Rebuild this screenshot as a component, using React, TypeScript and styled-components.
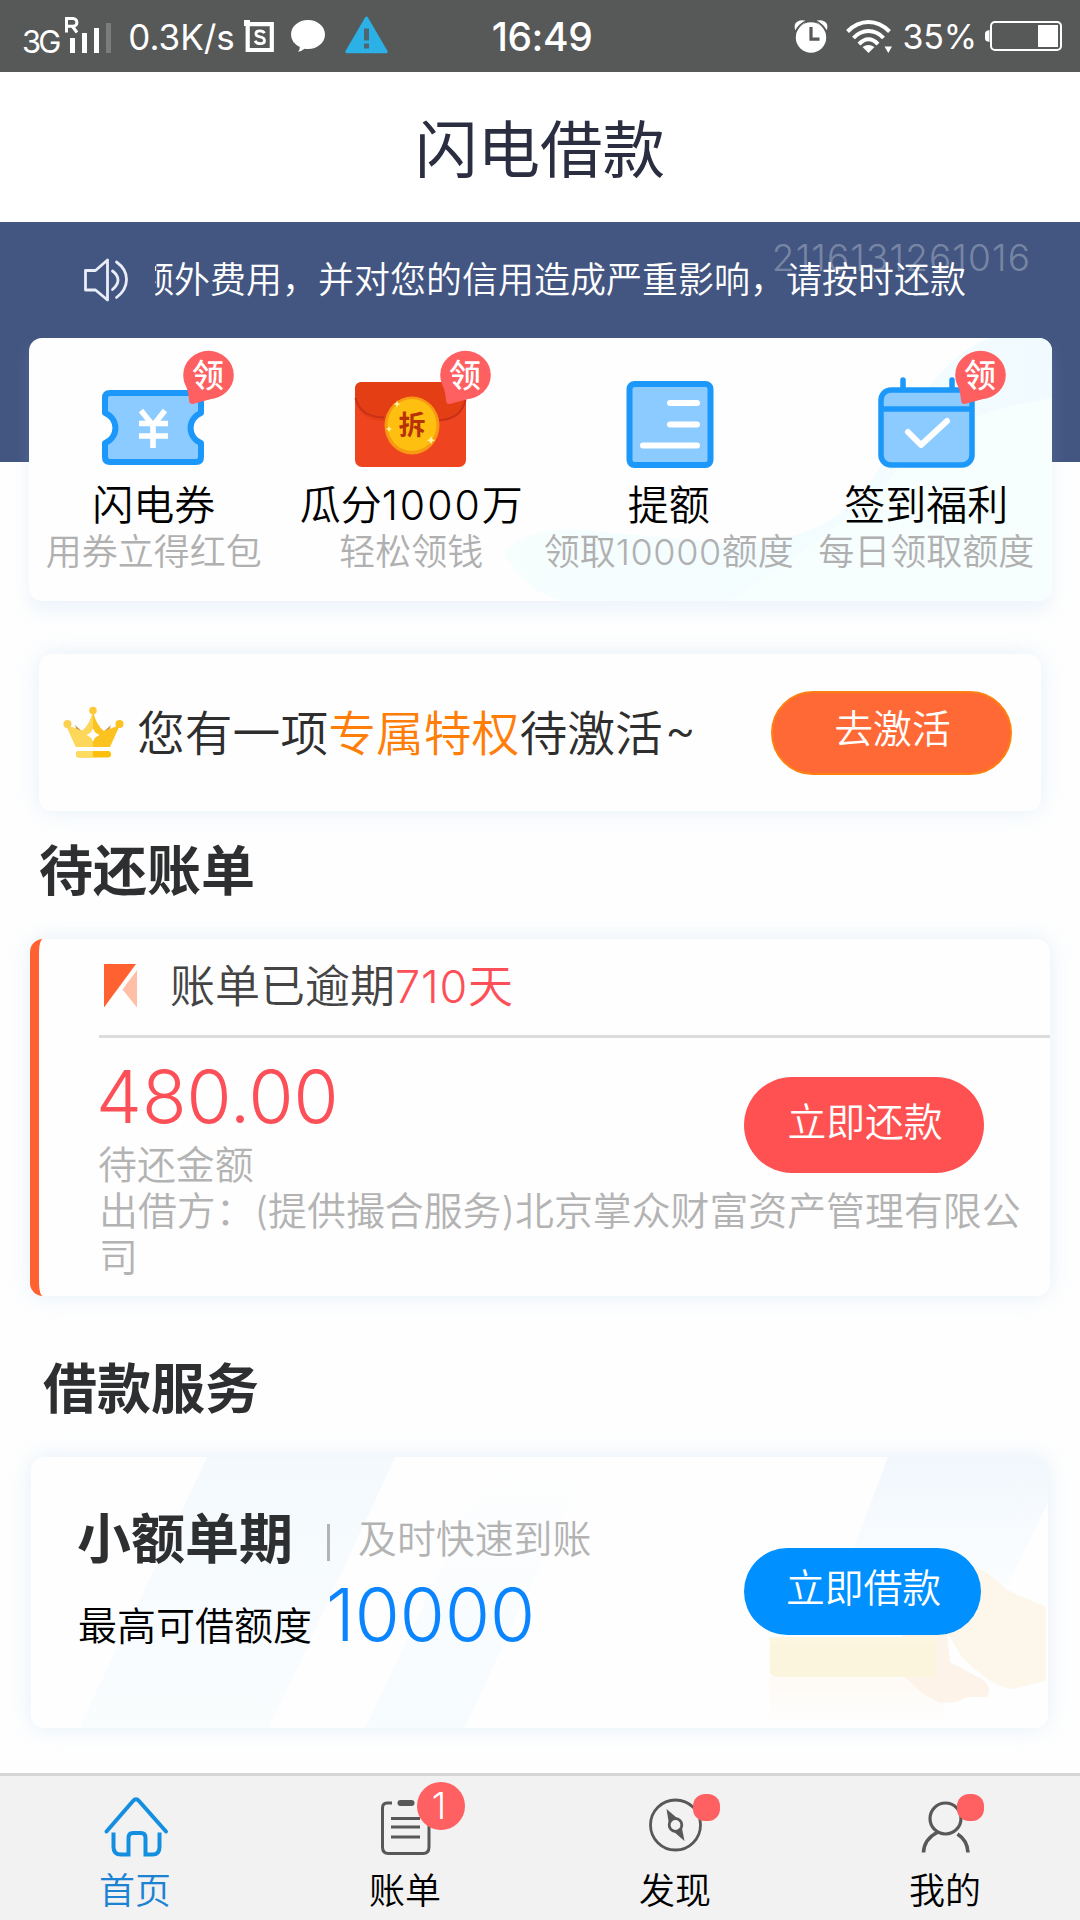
import React from "react";
import styled, { createGlobalStyle } from "styled-components";

const GlobalStyle = createGlobalStyle`
  html, body { margin: 0; padding: 0; background: #fefefe; }
  * { box-sizing: border-box; }
  svg { display: block; flex: none; overflow: visible; }
`;

const FONT = `"Inter", "Noto Sans CJK SC", sans-serif`;

const Page = styled.div`
  position: relative;
  width: 1080px;
  height: 1920px;
  display: flex;
  flex-direction: column;
  overflow: hidden;
  background: #fefefe;
  font-family: ${FONT};
  font-weight: 350;
  color: #000;
`;

/* ---------- status bar ---------- */

const StatusBar = styled.div`
  flex: none;
  height: 72px;
  padding: 0 18px 0 22px;
  display: grid;
  grid-template-columns: 1fr auto 1fr;
  align-items: center;
  background: #575858;
  color: #fff;
`;

const StatusGroup = styled.div<{ $end?: boolean }>`
  display: flex;
  align-items: center;
  height: 72px;
  justify-content: ${(p) => (p.$end ? "flex-end" : "flex-start")};
`;

const StatusText = styled.span<{ $size: number; $weight?: number; $ls?: number }>`
  font-size: ${(p) => p.$size}px;
  font-weight: ${(p) => p.$weight ?? 400};
  letter-spacing: ${(p) => p.$ls ?? 0}px;
  line-height: 70px;
  padding-top: 2px;
  white-space: nowrap;
`;

const Network = styled(StatusText)`
  padding-top: 12px;
  line-height: 60px;
`;

const Gap = styled.span<{ $w: number }>`
  flex: none;
  width: ${(p) => p.$w}px;
`;

/* ---------- title and notice ---------- */

const Header = styled.header`
  flex: none;
  height: 150px;
  display: flex;
  align-items: center;
  justify-content: center;
  background: #fff;
  font-size: 62.5px;
  font-weight: 400;
  line-height: 90px;
  color: #2b2d40;
  padding-top: 6px;
`;

const Hero = styled.section`
  position: relative;
  flex: none;
  height: 240px;
  background: #435681;
`;

const Notice = styled.div`
  position: relative;
  display: flex;
  align-items: center;
  height: 116px;
  padding: 0 114px 0 84px;
`;

const NoticeClip = styled.div`
  flex: none;
  width: 811px;
  margin-left: 27px;
  display: flex;
  justify-content: flex-end;
  overflow: hidden;
  white-space: nowrap;
  font-size: 36px;
  line-height: 60px;
  color: #fff;
`;

const Serial = styled.div`
  position: absolute;
  top: 10px;
  right: 49px;
  font-size: 37px;
  letter-spacing: 1.1px;
  line-height: 52px;
  color: rgba(255, 255, 255, 0.3);
`;

/* ---------- cards ---------- */

const Card = styled.section`
  position: relative;
  flex: none;
  background: #fefefe;
  border-radius: 13px;
  box-shadow: 0 0 22px rgba(150, 195, 235, 0.24);
`;

const FeatureCard = styled(Card)`
  height: 263px;
  margin: -124px 28px 0 29px;
  box-shadow: 0 10px 18px rgba(150, 195, 235, 0.16);
`;

const Backdrop = styled.svg`
  position: absolute;
  inset: 0;
  width: 100%;
  height: 100%;
  border-radius: 13px;
  overflow: hidden;
`;

const FeatureGrid = styled.div`
  position: relative;
  display: grid;
  grid-template-columns: repeat(4, 257.5px);
  margin: 0 -4px;
`;

const Feature = styled.div`
  display: flex;
  flex-direction: column;
  align-items: center;
  white-space: nowrap;
`;

const FeatureIcon = styled.div`
  position: relative;
  width: 120px;
  height: 100px;
  margin-top: 33px;
`;

const FeatureBadge = styled.div`
  position: absolute;
  left: 89px;
  top: -20px;
  width: 51px;
  height: 53px;
`;

const FeatureTitle = styled.div`
  margin-top: 9px;
  font-size: 41px;
  line-height: 50px;
`;

const Digits = styled.span<{ $ls: number }>`
  letter-spacing: ${(p) => p.$ls}px;
`;

const FeatureNote = styled.div`
  font-size: 36px;
  line-height: 44px;
  color: #b0b0b0;
`;

const Pill = styled.button<{ $w: number; $h: number; $bg: string; $edge?: string; $drop?: number }>`
  position: relative;
  flex: none;
  display: flex;
  align-items: center;
  justify-content: center;
  width: ${(p) => p.$w}px;
  height: ${(p) => p.$h}px;
  padding: 0 0 7px 2px;
  border: ${(p) => (p.$edge ? `2px solid ${p.$edge}` : "none")};
  border-radius: ${(p) => p.$h / 2}px;
  background: ${(p) => p.$bg};
  color: #fff;
  font: 350 38.8px/60px ${FONT};
  white-space: nowrap;
`;

const PromoCard = styled(Card)`
  height: 157px;
  margin: 53px 39px 0;
  padding: 0 29px 0 23px;
  display: flex;
  align-items: center;
`;

const PromoText = styled.div`
  flex: 1;
  margin-left: 12px;
  font-size: 47.8px;
  line-height: 70px;
  color: #2e2e2e;
  white-space: nowrap;
  padding-top: 3px;

  em {
    font-style: normal;
    color: #ff7e0a;
  }
`;

const Tilde = styled.span`
  margin-left: 2px;
  line-height: 0;
  vertical-align: 4px;
`;

const Heading = styled.h2<{ $h: number; $x: number; $top: number }>`
  flex: none;
  height: ${(p) => p.$h}px;
  margin: 0;
  padding: ${(p) => p.$top}px 0 0 ${(p) => p.$x}px;
  font-size: 54px;
  font-weight: 700;
  line-height: 60px;
  color: #2e2f30;
`;

/* ---------- bill ---------- */

const BillCard = styled(Card)`
  height: 357px;
  margin: 0 30px;
  border-left: 9px solid #ff6230;
  padding-left: 60px;
`;

const BillHead = styled.div`
  display: flex;
  align-items: center;
  height: 99px;
  padding: 0 0 2px 5px;
  border-bottom: 3px solid #dcdcdd;
  font-size: 45px;
  line-height: 60px;
  color: #444;
`;

const BillTitle = styled.div`
  margin-left: 32px;
  padding-top: 1px;
  white-space: nowrap;
`;

const Red = styled.span`
  color: #fd4f57;
`;

const BillMain = styled.div`
  display: flex;
  justify-content: space-between;
  padding-right: 66px;
  height: 150px;
`;

const Amount = styled.div`
  margin: 19px 0 0 -3px;
  font-size: 73px;
  line-height: 80px;
  color: #fd4f57;
`;

const Muted = styled.div`
  font-size: 38.9px;
  line-height: 45.5px;
  color: #b3b3b3;
  white-space: nowrap;
`;

const AmountLabel = styled(Muted)`
  margin: 5px 0 0 -1px;
`;

const Lender = styled(Muted)`
  width: 940px;
  white-space: normal;
  word-break: break-all;
`;

const PillSlot = styled.div<{ $top: number }>`
  padding-top: ${(p) => p.$top}px;
`;

/* ---------- loan ---------- */

const LoanCard = styled(Card)`
  height: 271px;
  margin: 0 32px 0 31px;
  padding: 0 67px 0 47px;
  display: flex;
  justify-content: space-between;
`;

const LoanInfo = styled.div`
  position: relative;
  padding-top: 50px;
`;

const LoanTop = styled.div`
  display: flex;
  align-items: center;
  height: 64px;
`;

const LoanName = styled.div`
  margin-left: -1px;
  padding-top: 2px;
  font-size: 54px;
  font-weight: 700;
  line-height: 64px;
  color: #2e2f30;
`;

const Rule = styled.span`
  width: 3px;
  height: 37px;
  margin: 6px 28px 0 34px;
  background: #b3b3b3;
`;

const LoanLimit = styled.div`
  display: flex;
  align-items: baseline;
  height: 80px;
  padding-top: 3px;
  font-size: 39px;
  line-height: 80px;

  b {
    position: relative;
    top: 1px;
    margin-left: 14px;
    font-size: 73px;
    font-weight: 350;
    color: #0a84ff;
  }
`;

/* ---------- tab bar ---------- */

const TabBar = styled.nav`
  flex: none;
  margin-top: auto;
  height: 147px;
  display: grid;
  grid-template-columns: repeat(4, 1fr);
  border-top: 3px solid #d6d6d6;
  background: #f2f2f2;
`;

const Tab = styled.div<{ $active?: boolean }>`
  display: flex;
  flex-direction: column;
  align-items: center;
  padding-top: 19px;
  font-size: 36px;
  line-height: 44px;
  color: ${(p) => (p.$active ? "#1c82d2" : "#000")};
`;

const TabIcon = styled.div`
  position: relative;
  width: 64px;
  height: 64px;
  margin-bottom: 10px;
`;

const Count = styled.span`
  position: absolute;
  left: 44px;
  top: -13px;
  width: 48px;
  height: 48px;
  border-radius: 50%;
  background: #ff6062;
  color: #fff;
  font-size: 37px;
  line-height: 48px;
  text-align: center;
  padding-right: 4px;
`;

const Dot = styled.span<{ $x: number }>`
  position: absolute;
  left: ${(p) => p.$x}px;
  top: -1px;
  width: 27px;
  height: 27px;
  border-radius: 12px;
  background: #ff6062;
`;

/* ---------- drawings ---------- */

const BLUE = "#1c98fa";
const SKY = "#8bcbff";

const SignalIcon = () => (
  <svg width="46" height="36" viewBox="0 0 46 36" fill="#fff">
    <path d="M1.500 14.500V.5H8a3.900 3.900 0 0 1 0 7.800H1.500M7.500 8.500l4.500 6" fill="none" stroke="#fff" strokeWidth="3" />
    <rect x="5" y="20" width="5" height="15" />
    <rect x="17" y="15" width="5" height="20" />
    <rect x="29" y="10" width="5" height="25" />
    <rect x="41" y="5" width="5" height="30" fill="#7b7c7c" />
  </svg>
);

const BoxIcon = () => (
  <svg width="30" height="33" viewBox="0 0 30 33">
    <path d="M3.700 4.200H27.800V30H3.700Z" fill="none" stroke="#fff" strokeWidth="4.200" />
    <rect x="0" y="0" width="6" height="6" fill="#fff" />
    <path d="M20.500 13.200q-1.200-2.400-4.600-2.400-4 0-4 3 0 2.400 4 3.100 4.600.8 4.600 3.600 0 3.200-4.300 3.200-4 0-5-3" fill="none" stroke="#fff" strokeWidth="2.800" />
  </svg>
);

const ChatIcon = () => (
  <svg width="34" height="32" viewBox="0 0 34 32" fill="#fff">
    <path d="M17 0C26.400 0 34 6.200 34 14.500S26.400 29 17 29q-1.800 0-3.500-.3Q10.500 31.500 6.800 31.700 9 30 8.800 27 0 22.500 0 14.500C0 6.200 7.600 0 17 0Z" />
  </svg>
);

const WarnIcon = () => (
  <svg width="43" height="38" viewBox="0 0 43 38">
    <path d="M21.500 1 41.200 34.800H1.800Z" fill="#2cb1e6" stroke="#2cb1e6" strokeWidth="3" strokeLinejoin="round" />
    <path d="M19 11.500h5v12h-5zM19 26.500h5v5h-5z" fill="#4d6670" />
  </svg>
);

const AlarmIcon = () => (
  <svg width="34" height="33" viewBox="0 0 34 33">
    <circle cx="17" cy="17.500" r="15.200" fill="#fff" />
    <path d="M1.500 10.500Q-1 4 3.500 1.500 8-1 12.500 1.200ZM32.500 10.500Q35 4 30.500 1.500 26-1 21.500 1.200Z" fill="#fff" />
    <path d="M1 12.500Q5 4 13 .8M33 12.500Q29 4 21 .8" fill="none" stroke="#575858" strokeWidth="1.600" />
    <path d="M17 7v12.200h8.500" fill="none" stroke="#575858" strokeWidth="3.200" />
  </svg>
);

const WifiIcon = () => (
  <svg width="46" height="33" viewBox="0 0 46 33" fill="none" stroke="#fff" strokeWidth="4">
    <path d="M1.500 11.500Q11 2 22.500 2T43.500 11.500" />
    <path d="M7.500 18Q14 11 22.500 11T37.500 18" />
    <path d="M13 24.200Q17.500 19.300 22.500 19.300T32 24.200" />
    <path d="M16.500 27q6-4 12 0l-6 6z" fill="#fff" stroke="none" />
    <path d="M38.500 26.500h7.500l-3.700 6.500z" fill="#fff" stroke="none" />
  </svg>
);

const BatteryIcon = () => (
  <svg width="77" height="30" viewBox="0 0 77 30">
    <path d="M4.500 9Q0 9.500 0 12.500v5Q0 20.500 4.500 21Z" fill="#fff" />
    <rect x="6" y="1" width="70" height="28" rx="4" fill="none" stroke="#fff" strokeWidth="2" />
    <rect x="53" y="4" width="20" height="22" fill="#fff" />
  </svg>
);

const SpeakerIcon = () => (
  <svg width="44" height="44" viewBox="0 0 44 44" fill="none" stroke="#e9edf8" strokeWidth="2.800" strokeLinejoin="round">
    <path d="M1.500 12.500H11.500L23.500 2V42L11.500 32H1.500Z" />
    <path d="M28.500 13Q34 17 34 22T28.500 31.500M32.500 4Q42.500 11 42.500 21.500T32.500 39.500" strokeLinecap="round" />
  </svg>
);

const TicketIcon = () => (
  <svg width="120" height="100" viewBox="0 0 120 100">
    <path
      d="M16 22H102Q107 22 107 27V42A16 16 0 0 0 107 72V86Q107 91 102 91H16Q11 91 11 86V72A16 16 0 0 0 11 42V27Q11 22 16 22Z"
      fill={SKY}
      stroke={BLUE}
      strokeWidth="6"
      strokeLinejoin="round"
    />
    <path d="M47 39.500 59 54.500 71 39.500M59 54V77M45 52.500H74M45 65H74" fill="none" stroke="#fff" strokeWidth="5.600" />
  </svg>
);

const PacketIcon = () => (
  <svg width="120" height="100" viewBox="0 0 120 100">
    <rect x="4" y="11" width="111" height="85" rx="7" fill="#ee4520" />
    <path d="M4 25V18Q4 11 11 11H108Q115 11 115 18V25Q112 50 86 50H33Q7 50 4 25Z" fill="#e43f14" />
    <path d="M4.500 27Q9 46 33 46.500M114.500 29Q110 49 86 49.500" fill="none" stroke="#c9301a" strokeWidth="2" />
    <ellipse cx="61" cy="54.500" rx="27.500" ry="29" fill="#f79a12" />
    <ellipse cx="61" cy="54" rx="24.500" ry="26" fill="#ffbf10" />
    <path d="M46 29.500l1 2.500 2.500 1-2.500 1-1 2.500-1-2.500-2.500-1 2.500-1ZM38 55l1 2 2 1-2 1-1 2-1-2-2-1 2-1ZM80 65l1.200 3 3 1.200-3 1.200-1.200 3-1.200-3-3-1.200 3-1.200Z" fill="#fff3a0" />
    <text x="61" y="64" textAnchor="middle" fontFamily="Noto Sans CJK SC" fontWeight="700" fontSize="27" fill="#b83208">
      拆
    </text>
  </svg>
);

const ListIcon = () => (
  <svg width="120" height="100" viewBox="0 0 120 100">
    <rect x="20.500" y="13" width="81" height="81" rx="5" fill={SKY} stroke={BLUE} strokeWidth="6" />
    <path d="M61 32H88M61 53.500H88M34 74.500H88" stroke="#fff" strokeWidth="6" strokeLinecap="round" />
  </svg>
);

const CalendarIcon = () => (
  <svg width="120" height="100" viewBox="0 0 120 100">
    <path d="M37 9V20M86 9V20" stroke={BLUE} strokeWidth="5.500" strokeLinecap="round" />
    <rect x="15" y="19" width="91" height="75" rx="10" fill={SKY} stroke={BLUE} strokeWidth="5.500" />
    <path d="M14 38H107" stroke={BLUE} strokeWidth="5.500" />
    <path d="M42 61 55 74 81 50" fill="none" stroke="#fff" strokeWidth="6" strokeLinecap="round" strokeLinejoin="round" />
  </svg>
);

const ClaimMark = () => (
  <svg width="51" height="53" viewBox="0 0 51 53">
    <ellipse cx="25.500" cy="24" rx="25.300" ry="24.200" fill="#fe5f60" />
    <path d="M1 30Q5 38 6 49 6 53.500 10 53L28 48Z" fill="#fe5f60" />
    <text x="25" y="36" textAnchor="middle" fontFamily="Noto Sans CJK SC" fontWeight="500" fontSize="32" fill="#fff">
      领
    </text>
  </svg>
);

const CrownIcon = () => (
  <svg width="63" height="52" viewBox="0 0 63 52">
    <path d="M13 18 22 26 31 16 40 26 49 18 44 34H18Z" fill="#c79a55" />
    <path d="M4 18 20 24Q28 18 31 4 34 18 42 24L58 18 48 40H14Z" fill="#fcc21f" />
    <path d="M4 18 20 24Q28 18 31 4V40H14Z" fill="#fdd75a" />
    <circle cx="5.500" cy="17" r="4" fill="#fbd04e" />
    <circle cx="57.500" cy="17" r="4" fill="#fcc21f" />
    <circle cx="31" cy="3.500" r="3.800" fill="#fcca38" />
    <path d="M31 22.500Q32 27 36.500 28 32 29 31 33.500 30 29 25.500 28 30 27 31 22.500Z" fill="#fff" stroke="#fff" strokeWidth="1.500" />
    <rect x="14" y="44" width="35" height="6.500" rx="3" fill="#fcc00c" />
    <path d="M17 44H31V50.500H17Q14 50.500 14 47.200T17 44Z" fill="#fdda60" />
  </svg>
);

const FlagIcon = () => (
  <svg width="34" height="44" viewBox="0 0 34 44">
    <path d="M0 0H32L0 43.500Z" fill="#ff6230" />
    <path d="M33 6V43.500L18.500 25.500Z" fill="#ffbea6" />
  </svg>
);

const HomeIcon = () => (
  <svg width="64" height="64" viewBox="0 0 64 64" fill="none" stroke="#148fe0" strokeWidth="4" strokeLinecap="round">
    <path d="M3.500 36.500 30 6Q33 2.500 36 6L63 36.500" />
    <path
      d="M10.500 37.500V52Q10.500 59.500 18 59.500H25.500V43Q25.500 38 30 38H38Q42.500 38 42.500 43V59.500H49.500Q56.500 59.500 56.500 52V37.500"
      strokeLinecap="butt"
    />
  </svg>
);

const BillIcon = () => (
  <svg width="64" height="64" viewBox="0 0 64 64" fill="none" stroke="#585858" strokeWidth="3">
    <path d="M19 8H14Q9.500 8 9.500 13V52Q9.500 58.500 15.500 58.500H50Q56 58.500 56 52V13Q56 8 51 8H45" />
    <path d="M27.500 8H38.500" strokeWidth="6" strokeLinecap="round" />
    <path d="M18 23.500H47M18 32H47M18 42H47" />
  </svg>
);

const CompassIcon = () => (
  <svg width="64" height="64" viewBox="0 0 64 64" fill="none" stroke="#585858" strokeWidth="2.800">
    <circle cx="32.500" cy="30" r="25" />
    <path d="M23.500 14 34 23 38.500 31 41.500 46 30.500 36.500 26 29Z" fill="#585858" stroke="none" />
    <circle cx="32.500" cy="30" r="6.300" fill="#f2f2f2" />
  </svg>
);

const PersonIcon = () => (
  <svg width="64" height="64" viewBox="0 0 64 64" fill="none" stroke="#585858" strokeWidth="3.200">
    <circle cx="32.500" cy="23.500" r="15.500" />
    <path d="M10.500 57.500Q11 44 25 37M44.500 39Q54.500 45.500 55 57.500" strokeWidth="3.600" />
  </svg>
);

const FeatureBackdrop = () => (
  <Backdrop viewBox="0 0 1023 262" preserveAspectRatio="none">
    <defs>
      <linearGradient id="mist" x1="0" y1="0" x2="1" y2="0">
        <stop offset="0" stopColor="#f6fefe" />
        <stop offset="1" stopColor="#f1fbff" />
      </linearGradient>
    </defs>
    <path d="M475 215Q490 192 540 190L700 205Q810 205 850 130 905 20 960 0H1023V262H540Q505 262 475 215Z" fill="url(#mist)" />
    <path d="M770 215Q850 160 890 105 950 70 1023 60V262H700Z" fill="#f7fefe" />
  </Backdrop>
);

const LoanBackdrop = () => (
  <Backdrop viewBox="0 0 1016 271" preserveAspectRatio="none">
    <defs>
      <linearGradient id="band" x1="0" y1="0" x2="0" y2="1">
        <stop offset="0" stopColor="#f4f9fd" />
        <stop offset="1" stopColor="#fafdfe" />
      </linearGradient>
      <linearGradient id="bandUp" x1="0" y1="0" x2="0" y2="1">
        <stop offset="0" stopColor="#fefefe" />
        <stop offset="1" stopColor="#f6fbfe" />
      </linearGradient>
      <linearGradient id="sleeve" x1="0" y1="0" x2="0" y2="1">
        <stop offset="0" stopColor="#f2f7fd" />
        <stop offset="1" stopColor="#fbfeff" />
      </linearGradient>
      <linearGradient id="glow" x1="0" y1="0" x2="0" y2="1">
        <stop offset="0" stopColor="#fefaf5" />
        <stop offset="1" stopColor="#fefefe" />
      </linearGradient>
    </defs>
    <path d="M176 0H364L238 271H48Z" fill="url(#band)" />
    <path d="M462 0H560L433 271H334Z" fill="url(#bandUp)" />
    <path d="M856 0H1016V45L975 130 915 110H815Z" fill="url(#sleeve)" />
    <path d="M738 220H912V271H738Z" fill="url(#glow)" />
    <path d="M940 108Q965 120 975 133L1014 150V224L980 232Q960 230 930 200L915 175Z" fill="#fdf6ea" />
    <path d="M870 175H915L918 205 950 222Q962 232 954 240L935 240 925 245 908 246 890 236 873 220Z" fill="#fdf3e8" />
    <path d="M738 180H904V215Q904 220 899 220H745Q738 220 738 213Z" fill="#faf5dc" />
    <path d="M738 180H904V186H738Z" fill="#fdf6e0" />
  </Backdrop>
);

/* ---------- screen ---------- */

const features = [
  { title: "闪电券", note: "用券立得红包", icon: <TicketIcon />, claim: true },
  { title: <>瓜分<Digits $ls={2}>1000</Digits>万</>, note: "轻松领钱", icon: <PacketIcon />, claim: true },
  { title: "提额", note: <>领取<Digits $ls={0.6}>10000</Digits>额度</>, icon: <ListIcon />, claim: false },
  { title: "签到福利", note: "每日领取额度", icon: <CalendarIcon />, claim: true },
];

const tabs = [
  { label: "首页", icon: <HomeIcon />, active: true },
  { label: "账单", icon: <BillIcon />, mark: <Count>1</Count> },
  { label: "发现", icon: <CompassIcon />, mark: <Dot $x={50} /> },
  { label: "我的", icon: <PersonIcon />, mark: <Dot $x={44} /> },
];

export default function App() {
  return (
    <Page>
      <GlobalStyle />
      <StatusBar>
        <StatusGroup>
          <Network $size={31} $ls={-3}>3G</Network>
          <Gap $w={7} />
          <SignalIcon />
          <Gap $w={17} />
          <StatusText $size={35}>0.3K/s</StatusText>
          <Gap $w={9} />
          <BoxIcon />
          <Gap $w={17} />
          <ChatIcon />
          <Gap $w={20} />
          <WarnIcon />
        </StatusGroup>
        <StatusText $size={39} $weight={450} $ls={-0.4}>16:49</StatusText>
        <StatusGroup $end>
          <AlarmIcon />
          <Gap $w={18} />
          <WifiIcon />
          <Gap $w={11} />
          <StatusText $size={34} $ls={-0.2}>35%</StatusText>
          <Gap $w={8} />
          <BatteryIcon />
        </StatusGroup>
      </StatusBar>

      <Header>闪电借款</Header>

      <Hero>
        <Serial>2116131261016</Serial>
        <Notice>
          <SpeakerIcon />
          <NoticeClip>额外费用，并对您的信用造成严重影响，请按时还款</NoticeClip>
        </Notice>
      </Hero>

      <FeatureCard>
        <FeatureBackdrop />
        <FeatureGrid>
          {features.map((f, i) => (
            <Feature key={i}>
              <FeatureIcon>
                {f.icon}
                {f.claim && (
                  <FeatureBadge>
                    <ClaimMark />
                  </FeatureBadge>
                )}
              </FeatureIcon>
              <FeatureTitle>{f.title}</FeatureTitle>
              <FeatureNote>{f.note}</FeatureNote>
            </Feature>
          ))}
        </FeatureGrid>
      </FeatureCard>

      <PromoCard>
        <CrownIcon />
        <PromoText>
          您有一项<em>专属特权</em>待激活<Tilde>~</Tilde>
        </PromoText>
        <Pill $w={241} $h={84} $bg="#ff6936" $edge="#ff8010">去激活</Pill>
      </PromoCard>

      <Heading $h={128} $x={39} $top={31}>待还账单</Heading>

      <BillCard>
        <BillHead>
          <FlagIcon />
          <BillTitle>
            账单已逾期<Red><Digits $ls={0.8}>710</Digits>天</Red>
          </BillTitle>
        </BillHead>
        <BillMain>
          <div>
            <Amount>480.00</Amount>
            <AmountLabel>待还金额</AmountLabel>
          </div>
          <PillSlot $top={39}>
            <Pill $w={240} $h={96} $bg="#ff5152">立即还款</Pill>
          </PillSlot>
        </BillMain>
        <Lender>出借方：(提供撮合服务)北京掌众财富资产管理有限公司</Lender>
      </BillCard>

      <Heading $h={161} $x={43} $top={64}>借款服务</Heading>

      <LoanCard>
        <LoanBackdrop />
        <LoanInfo>
          <LoanTop>
            <LoanName>小额单期</LoanName>
            <Rule />
            <Muted>及时快速到账</Muted>
          </LoanTop>
          <LoanLimit>
            最高可借额度<b>10000</b>
          </LoanLimit>
        </LoanInfo>
        <PillSlot $top={91}>
          <Pill $w={237} $h={87} $bg="#0090ff">立即借款</Pill>
        </PillSlot>
      </LoanCard>

      <TabBar>
        {tabs.map((t) => (
          <Tab key={t.label} $active={t.active}>
            <TabIcon>
              {t.icon}
              {t.mark}
            </TabIcon>
            {t.label}
          </Tab>
        ))}
      </TabBar>
    </Page>
  );
}
